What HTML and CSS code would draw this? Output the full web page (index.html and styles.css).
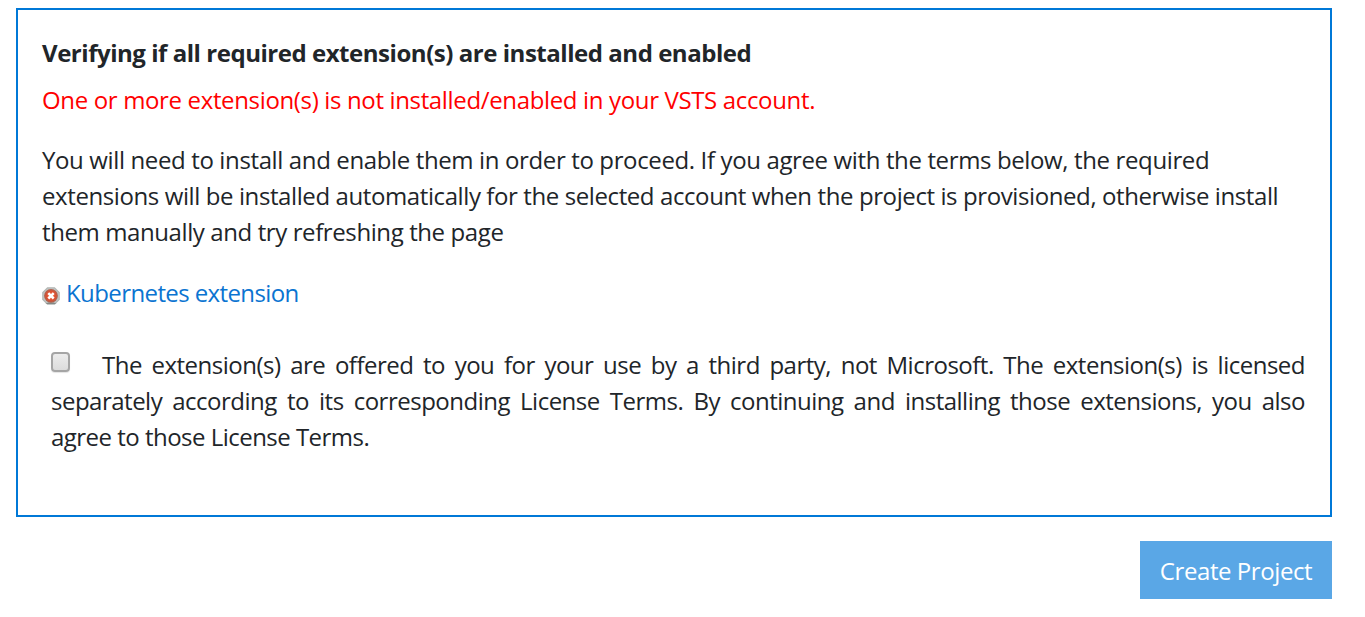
FILE: index.html
```html
<!DOCTYPE html>
<html lang="en">
<head>
<meta charset="utf-8">
<title>Create Project</title>
<link rel="stylesheet" href="styles.css">
</head>
<body>
<main class="page">
  <section class="panel">
    <h1 class="title"><span class="line">Verifying if all required extension(s) are installed and enabled</span></h1>
    <p class="error"><span class="line">One or more extension(s) is not installed/enabled in your VSTS account.</span></p>
    <p class="info">
      <span class="line">You will need to install and enable them in order to proceed. If you agree with the terms below, the required</span>
      <span class="line info-wide">extensions will be installed automatically for the selected account when the project is provisioned, otherwise install</span>
      <span class="line info-wide">them manually and try refreshing the page</span>
    </p>
    <div class="extension">
      <svg class="status" viewBox="0 0 18 18" width="18" height="18">
        <defs>
          <radialGradient id="red"><stop offset="0" stop-color="#ff7040"/><stop offset=".65" stop-color="#dc5032"/><stop offset="1" stop-color="#a86250"/></radialGradient>
        </defs>
        <path d="M5.500 .8h7L17.200 5.500v7L12.500 17.200h-7L.8 12.500v-7z" fill="#c4c6c4" stroke="#b4b8b6" stroke-width="1.200"/>
        <path d="M6 15.500h6l2.500 1.500h-11z" fill="#858985"/>
        <circle cx="9" cy="8.800" r="6.900" fill="url(#red)"/>
        <path d="M6.300 6.100l5.400 5.400M11.700 6.100l-5.400 5.400" stroke="#fff" stroke-width="2.500"/>
      </svg>
      <a class="link"><span class="line">Kubernetes extension</span></a>
    </div>
    <div class="terms">
      <div class="terms-first"><span class="checkbox"></span><span class="line justified">The extension(s) are offered to you for your use by a third party, not Microsoft. The extension(s) is licensed</span></div>
      <span class="line justified">separately according to its corresponding License Terms. By continuing and installing those extensions, you also</span>
      <span class="line terms-last">agree to those License Terms.</span>
    </div>
  </section>
  <button class="create"><span class="line">Create Project</span></button>
</main>
</body>
</html>
```
FILE: styles.css
```css
* { box-sizing: border-box; }
body { margin: 0; background: #fff; color: #212529; font: 24px/36px "Open Sans", "Noto Sans", sans-serif; }
.page { display: flex; flex-direction: column; padding: 8px 33px 0 16px; }
.panel { height: 509px; border: 2px solid #0078d7; padding: 25px 24px 0; }
.line { display: block; width: max-content; white-space: nowrap; }
.title, .error, .info { margin: 0; font-size: 24px; }
.title { font-weight: 700; letter-spacing: -0.46px; }
.error { margin-top: 11px; color: #f00; letter-spacing: -0.35px; }
.info { margin-top: 24px; letter-spacing: -0.37px; }
.info-wide { letter-spacing: -0.4px; }
.extension { display: flex; align-items: center; gap: 6px; margin-top: 25px; letter-spacing: -0.6px; }
.status { flex: none; margin-top: 5px; }
.link { color: #0b74d1; }
.terms { width: 1254px; margin: 36px 0 0 9px; letter-spacing: -0.5px; }
.terms-first { display: flex; gap: 32px; }
.justified { width: 100%; white-space: normal; text-align: justify; text-align-last: justify; }
.terms-first .justified { flex: 1; width: auto; }
.terms-last { letter-spacing: -0.52px; }
.checkbox { flex: none; width: 19px; height: 20px; margin-top: 5px; border: 2px solid #a5a5a5; border-radius: 4px; background: linear-gradient(#ececec, #dcdcdc); box-shadow: 0 1px 1px #e4e4e4; }
.create { align-self: flex-end; width: 192px; height: 58px; margin-top: 24px; padding: 2px 0 0; border: 0; background: #5aa7e6; color: #fff; font: inherit; letter-spacing: -0.43px; display: flex; align-items: center; justify-content: center; }
```
